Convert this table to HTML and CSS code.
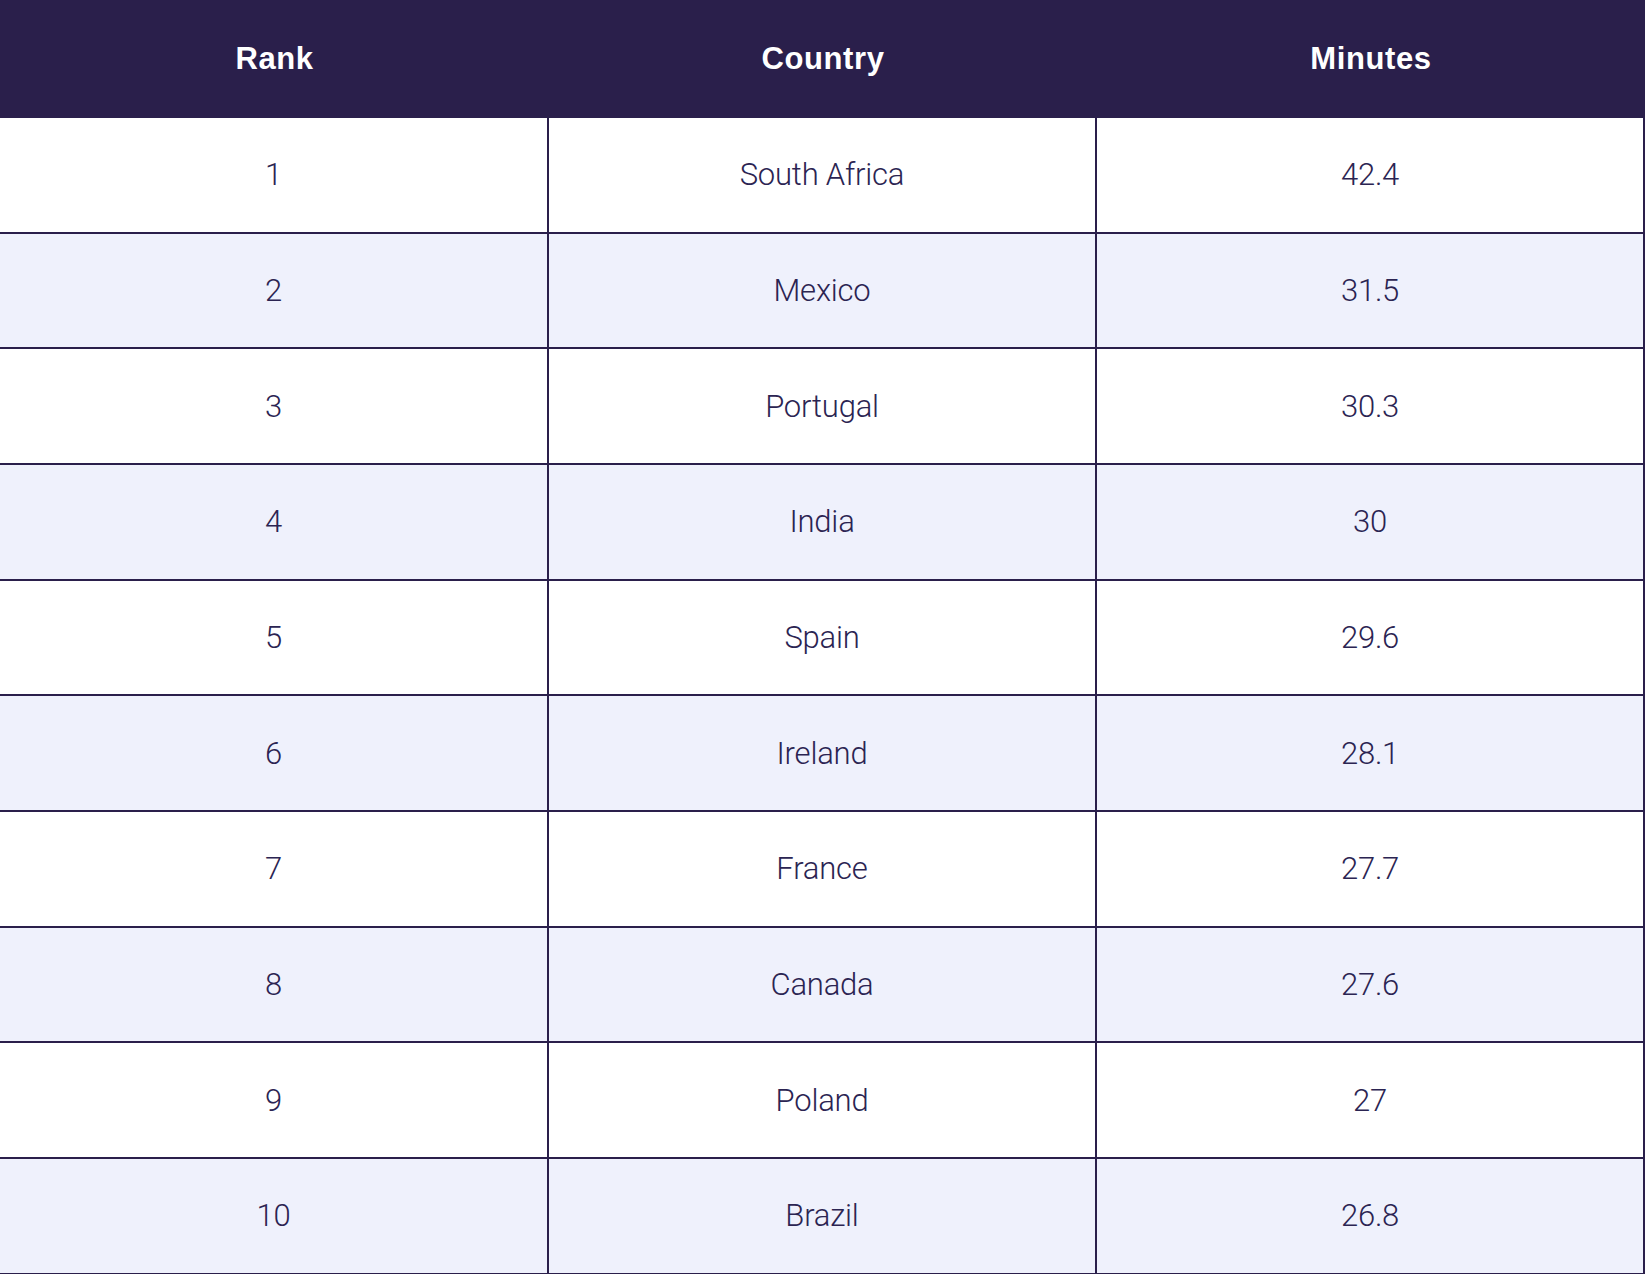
FILE: index.html
```html
<!DOCTYPE html>
<html>
<head>
<meta charset="utf-8">
<link rel="stylesheet" href="styles.css">
</head>
<body>
<div class="table">
  <div class="row head">
    <div class="cell">Rank</div>
    <div class="cell">Country</div>
    <div class="cell">Minutes</div>
  </div>
  <div class="row"><div class="cell">1</div><div class="cell">South Africa</div><div class="cell">42.4</div></div>
  <div class="row alt"><div class="cell">2</div><div class="cell">Mexico</div><div class="cell">31.5</div></div>
  <div class="row"><div class="cell">3</div><div class="cell">Portugal</div><div class="cell">30.3</div></div>
  <div class="row alt"><div class="cell">4</div><div class="cell">India</div><div class="cell">30</div></div>
  <div class="row"><div class="cell">5</div><div class="cell">Spain</div><div class="cell">29.6</div></div>
  <div class="row alt"><div class="cell">6</div><div class="cell">Ireland</div><div class="cell">28.1</div></div>
  <div class="row"><div class="cell">7</div><div class="cell">France</div><div class="cell">27.7</div></div>
  <div class="row alt"><div class="cell">8</div><div class="cell">Canada</div><div class="cell">27.6</div></div>
  <div class="row"><div class="cell">9</div><div class="cell">Poland</div><div class="cell">27</div></div>
  <div class="row alt"><div class="cell">10</div><div class="cell">Brazil</div><div class="cell">26.8</div></div>
</div>
</body>
</html>
```
FILE: styles.css
```css
html, body {
  margin: 0;
  padding: 0;
  background: #ffffff;
}
.table {
  width: 1645px;
  display: flex;
  flex-direction: column;
  font-family: Roboto, "Liberation Sans", sans-serif;
  color: #2b2452;
}
.row {
  display: grid;
  grid-template-columns: 549px 548px 548px;
  height: 115.67px;
  box-sizing: border-box;
  border-bottom: 2px solid #2a1f4b;
  background: #ffffff;
}
.row.alt {
  background: #eff1fc;
}
.cell {
  display: flex;
  align-items: center;
  justify-content: center;
  border-right: 2px solid #2a1f4b;
  font-size: 31px;
  font-weight: 300;
  letter-spacing: -0.2px;
}
.row.head {
  height: 118px;
  background: #2a1f4b;
  color: #ffffff;
  border-bottom: none;
}
.row.head .cell {
  font-family: "Liberation Sans", Arial, sans-serif;
  font-weight: 700;
  font-size: 31px;
  letter-spacing: 0.6px;
  border-right: none;
}
```
